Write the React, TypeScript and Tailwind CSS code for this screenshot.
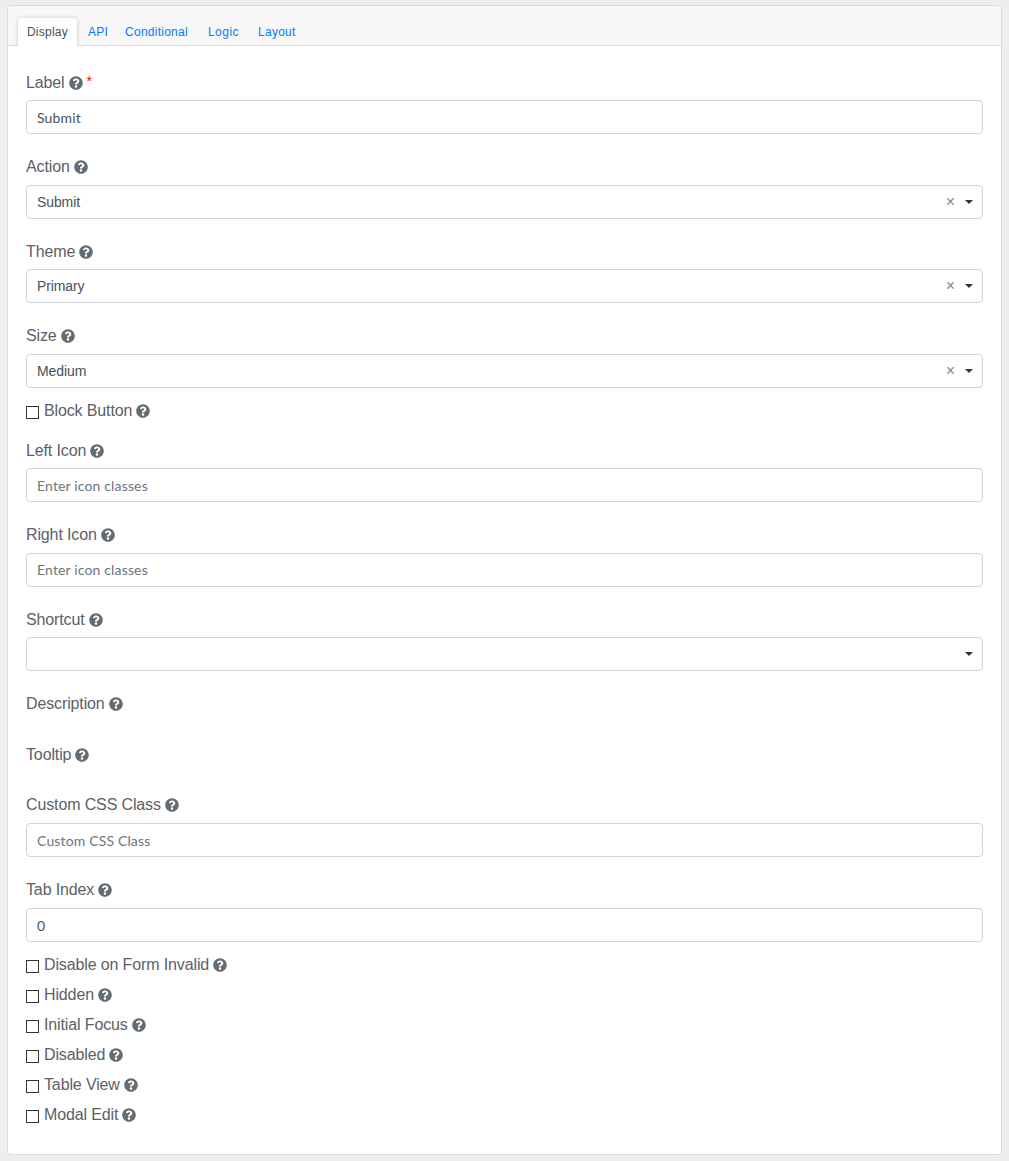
import type { ReactNode } from "react";
import { FaQuestionCircle } from "react-icons/fa";

const sans = "[font-family:'Liberation_Sans',Arial,sans-serif]";

function Help() {
  return <FaQuestionCircle className="inline-block w-[14px] h-[14px] text-[#636c72] shrink-0" />;
}

function Label({ text, required }: { text: string; required?: boolean }) {
  return (
    <div className="flex items-center h-6 gap-[4px] text-base text-[#5c6166] tracking-[-0.13px]">
      <span>{text}</span>
      <Help />
      {required && <span className="text-[#ff0000] text-sm leading-none -mt-[3px]">*</span>}
    </div>
  );
}

function TextField({ value, placeholder }: { value?: string; placeholder?: string }) {
  return (
    <input
      readOnly
      value={value}
      placeholder={placeholder}
      className="block w-full h-[34px] px-[10px] border border-[#ced4da] rounded-[4px] bg-white text-sm tracking-[0.15px] text-[#495057] placeholder:text-[#6c757d] outline-none [font-family:Lato,sans-serif]"
    />
  );
}

function SelectField({ value, clear = true }: { value?: string; clear?: boolean }) {
  return (
    <div className="flex items-center w-full h-[34px] pl-[10px] pr-[9px] border border-[#ced4da] rounded-[4px] bg-white text-sm tracking-[-0.1px] text-[#495057]">
      <span className="flex-1">{value}</span>
      {clear && <span className="text-[#888] text-base leading-none mr-[10px]">×</span>}
      <span className="w-0 h-0 border-x-[4px] border-x-transparent border-t-[4px] border-t-[#333]" />
    </div>
  );
}

function Group({
  label,
  required,
  children,
  className = "mb-[21px]",
  labelGap = "mb-[5.5px]",
}: {
  label: string;
  required?: boolean;
  children: ReactNode;
  className?: string;
  labelGap?: string;
}) {
  return (
    <div className={className}>
      <div className={labelGap}>
        <Label text={label} required={required} />
      </div>
      {children}
    </div>
  );
}

function Check({ label }: { label: string }) {
  return (
    <div className="flex items-center h-[30px] gap-[4px] text-base text-[#5c6166] tracking-[-0.13px]">
      <span className="w-[13px] h-[13px] mt-[3px] mr-[1px] border border-[#333] bg-white shrink-0" />
      <span>{label}</span>
      <Help />
    </div>
  );
}

export default function App() {
  const tabs = [
    { t: "API", c: "mr-[-3px]" },
    { t: "Conditional", c: "" },
    { t: "Logic", c: "mr-[-1px] tracking-[0.5px]" },
    { t: "Layout", c: "" },
  ];
  return (
    <div className={`${sans} w-[1009px] h-[1161px] bg-[#eeeeee] pt-[5px] px-[7px]`}>
      <div className="h-[1150px] bg-white border border-[#dddddd] rounded-[4px] overflow-hidden">
        <div className="flex h-[40px] pt-[12px] pl-[10px] bg-[#f7f7f7] border-b border-[#dddddd] text-xs tracking-[0.25px]">
          <div className="h-[28px] w-[59px] flex items-center justify-center bg-white rounded-t-[4px] text-[#495057] shadow-[0_0_4px_rgba(0,0,0,0.2)] [clip-path:inset(-4px_-4px_0_-4px)]">
            Display
          </div>
          <div className="flex h-[27px] items-center ml-[1px]">
            {tabs.map((x) => (
              <span key={x.t} className={`px-[10px] text-[#007bff] ${x.c}`}>
                {x.t}
              </span>
            ))}
          </div>
        </div>
        <div className="pt-[24.5px] px-[18px]">
          <Group label="Label" required>
            <TextField value="Submit" />
          </Group>
          <Group label="Action">
            <SelectField value="Submit" />
          </Group>
          <Group label="Theme">
            <SelectField value="Primary" />
          </Group>
          <Group label="Size" className="mb-[8px]">
            <SelectField value="Medium" />
          </Group>
          <div className="mb-[13px]">
            <Check label="Block Button" />
          </div>
          <Group label="Left Icon">
            <TextField placeholder="Enter icon classes" />
          </Group>
          <Group label="Right Icon">
            <TextField placeholder="Enter icon classes" />
          </Group>
          <Group label="Shortcut">
            <SelectField clear={false} />
          </Group>
          <div className="mb-[27px]">
            <Label text="Description" />
          </div>
          <div className="mb-[26px]">
            <Label text="Tooltip" />
          </div>
          <Group label="Custom CSS Class" labelGap="mb-[6px]">
            <TextField placeholder="Custom CSS Class" />
          </Group>
          <Group label="Tab Index" className="mb-[7.5px]" labelGap="mb-[6px]">
            <TextField value="0" />
          </Group>
          {["Disable on Form Invalid", "Hidden", "Initial Focus", "Disabled", "Table View", "Modal Edit"].map((c) => (
            <Check key={c} label={c} />
          ))}
        </div>
      </div>
    </div>
  );
}
